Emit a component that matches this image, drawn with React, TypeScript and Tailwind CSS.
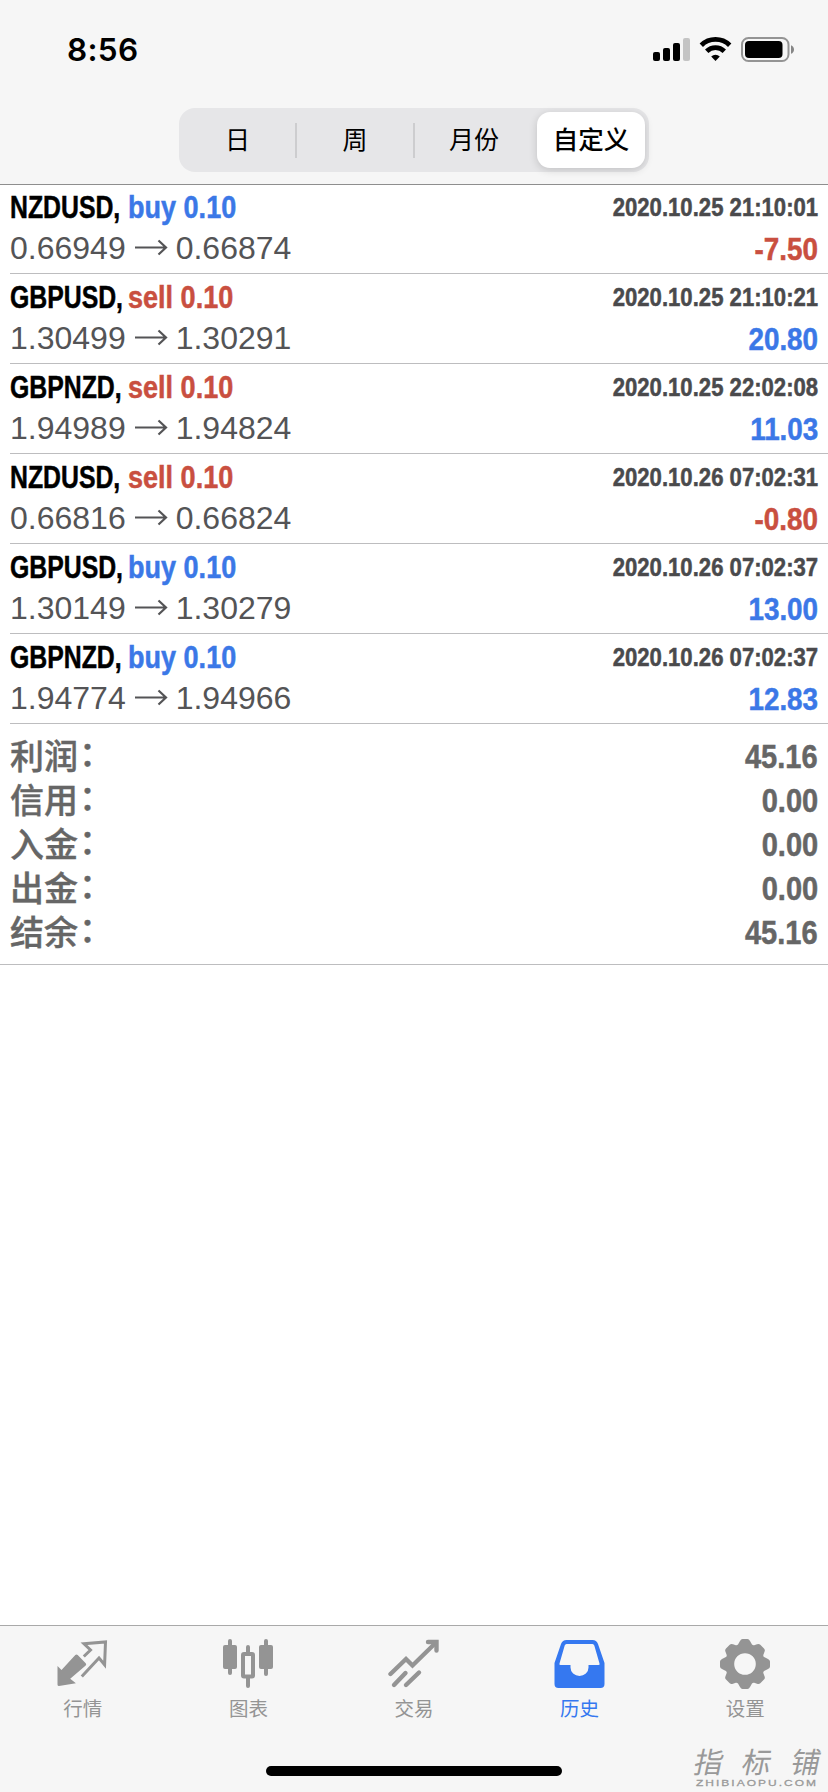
import type { ReactNode } from "react";

type Deal = {
  symbol: string;
  side: "buy" | "sell";
  from: string;
  to: string;
  time: string;
  profit: string;
};

const deals: Deal[] = [
  { symbol: "NZDUSD", side: "buy", from: "0.66949", to: "0.66874", time: "2020.10.25 21:10:01", profit: "-7.50" },
  { symbol: "GBPUSD", side: "sell", from: "1.30499", to: "1.30291", time: "2020.10.25 21:10:21", profit: "20.80" },
  { symbol: "GBPNZD", side: "sell", from: "1.94989", to: "1.94824", time: "2020.10.25 22:02:08", profit: "11.03" },
  { symbol: "NZDUSD", side: "sell", from: "0.66816", to: "0.66824", time: "2020.10.26 07:02:31", profit: "-0.80" },
  { symbol: "GBPUSD", side: "buy", from: "1.30149", to: "1.30279", time: "2020.10.26 07:02:37", profit: "13.00" },
  { symbol: "GBPNZD", side: "buy", from: "1.94774", to: "1.94966", time: "2020.10.26 07:02:37", profit: "12.83" },
];

const summary = [
  ["利润", "45.16"],
  ["信用", "0.00"],
  ["入金", "0.00"],
  ["出金", "0.00"],
  ["结余", "45.16"],
];

function StatusBar() {
  return (
    <div className="flex h-[108px] items-start justify-between pl-[67px] pr-[33px] pt-[31px]">
      <div className="font-['Inter',sans-serif] text-[31.5px] font-semibold leading-[38px] tracking-[0.3px] text-black">8:56</div>
      <svg className="mt-[5px]" width="142" height="28" viewBox="0 0 142 28">
        <rect x="0" y="16" width="7" height="9" rx="2" />
        <rect x="10" y="12" width="7" height="13" rx="2" />
        <rect x="20" y="7" width="7" height="18" rx="2" />
        <rect x="30" y="2" width="7" height="23" rx="2" fill="#c4c4c4" />
        <g fill="none" stroke="#000" strokeWidth="4.8">
          <path d="M48.3 9.2a20.3 20.3 0 0 1 28.4 0" />
          <path d="M53.7 15.3a12.6 12.6 0 0 1 17.6 0" />
        </g>
        <path d="M58.2 20.4a6.3 6.3 0 0 1 8.6 0l-4.3 4.5z" />
        <rect x="89" y="2" width="46.5" height="23" rx="6.5" fill="none" stroke="#949494" strokeWidth="2" />
        <rect x="92" y="5" width="37.5" height="17" rx="4" />
        <path d="M138 9.2c4 1.4 4 7.2 0 8.6z" fill="#868686" />
      </svg>
    </div>
  );
}

function SegmentedControl() {
  return (
    <div className="mx-auto flex h-[64px] w-[470px] items-center rounded-[16px] bg-[#e6e6e8] p-1 font-['Noto_Sans_CJK_SC',sans-serif] text-[25px] leading-none text-black">
      <div className="w-[112px] pb-[3px] pr-[3px] text-center">日</div>
      <div className="h-[35px] w-[2px] bg-[#cdcdcf]" />
      <div className="w-[116px] pb-[3px] text-center">周</div>
      <div className="h-[35px] w-[2px] bg-[#cdcdcf]" />
      <div className="w-[122px] pb-[3px] pr-[4px] text-center">月份</div>
      <div className="flex h-[56px] flex-1 items-center justify-center rounded-[13px] bg-white pb-[4px] text-[25.5px] font-medium shadow-[0_2px_8px_rgba(0,0,0,0.16)]">
        自定义
      </div>
    </div>
  );
}

function DealRow({ deal }: { deal: Deal }) {
  const blue = "text-[#3b78e7]";
  const red = "text-[#c94f40]";
  return (
    <div className="ml-[10px] h-[90px] border-b border-[#bdbdbf] pr-[10px] pt-[3px] font-['Liberation_Sans',sans-serif]">
      <div className="flex h-[40px] items-center justify-between whitespace-nowrap font-bold [-webkit-text-stroke:0.5px]">
        <div className="flex text-[32px] leading-[40px]">
          <div className="w-[118px]">
            <div className="w-max origin-left scale-x-[0.775] text-black">{deal.symbol},</div>
          </div>
          <div className={`w-max origin-left scale-x-[0.845] ${deal.side === "buy" ? blue : red}`}>{deal.side} 0.10</div>
        </div>
        <div className="origin-right scale-x-[0.885] pt-[2px] text-[25px] text-[#4a4a4c]">{deal.time}</div>
      </div>
      <div className="flex h-[42px] items-center justify-between whitespace-nowrap">
        <div className="flex items-center text-[32px] leading-[42px] text-[#545456]">
          {deal.from}
          <svg className="ml-[8px] mr-[8px]" width="34" height="18" viewBox="0 0 34 18" fill="none" stroke="#545456" strokeWidth="2.2">
            <path d="M1 8.500h31M24.500 1.500l7.500 7-7.500 7" />
          </svg>
          {deal.to}
        </div>
        <div className={`origin-right scale-x-[0.87] pt-[2px] text-[32px] font-bold leading-[42px] [-webkit-text-stroke:0.5px] ${deal.profit.startsWith("-") ? red : blue}`}>{deal.profit}</div>
      </div>
    </div>
  );
}

function Tab({ label, active, children }: { label: string; active?: boolean; children: ReactNode }) {
  return (
    <div className={`flex flex-1 flex-col items-center ${active ? "text-[#3578f0]" : "text-[#949494]"}`}>
      <svg className="mt-[12px]" width="52" height="52" viewBox="0 0 52 52" fill="currentColor" stroke="none">
        {children}
      </svg>
      <div className="mt-[6px] font-['Noto_Sans_CJK_SC',sans-serif] text-[19.5px] leading-[24px]">{label}</div>
    </div>
  );
}

function TabBar() {
  return (
    <div className="relative h-[167px] border-t border-[#a9a9a9] bg-[#f6f6f6]">
      <div className="flex">
        <Tab label="行情">
          <path d="M18.300 17q1.200-1.200 2.400 0l8 8.300q1 1.100 0 2.200L13.200 40.700l5.700 4.600L2 48q-1.500 0-1.500-1.500V28l4 4z" />
          <path d="M26.800 18.500L33.500 12 27 5.800 48.500 4 47.600 26.800 42 20 24.800 38.500" fill="none" stroke="currentColor" strokeWidth="3" />
        </Tab>
        <Tab label="图表">
          <rect x="1" y="7" width="14" height="24" rx="2" />
          <rect x="6" y="1" width="4" height="36" rx="2" />
          <rect x="37" y="7" width="14" height="24" rx="2" />
          <rect x="42" y="1" width="4" height="37" rx="2" />
          <rect x="21" y="16" width="10" height="22.5" rx="1" fill="none" stroke="currentColor" strokeWidth="4" />
          <path d="M26 9v6M26 40v8" stroke="currentColor" strokeWidth="4" strokeLinecap="round" />
        </Tab>
        <Tab label="交易">
          <g fill="none" stroke="currentColor" strokeWidth="4.4" strokeLinecap="round" strokeLinejoin="round">
            <path d="M2.500 36l15.500-15 6.500 6.500L47.500 5" strokeLinejoin="miter" />
            <path d="M40 4h8.500v8.500" strokeLinejoin="miter" />
            <path d="M6 47L17.500 35M18 47L31 34.500" />
          </g>
        </Tab>
        <Tab label="历史" active>
          <path fillRule="evenodd" d="M12.500 2h26q4 0 5.500 4L50.500 25v21q0 4-4 4h-42q-4 0-4-4V25L7 6q1.500-4 5.500-4zM12.500 6q-1.300 0-1.800 1.500L5.500 25.500q-.5 1.500 1 1.500h10v2.500a9 8.500 0 0 0 18 0V27h10q1.500 0 1-1.500L40.300 7.500Q39.800 6 38.500 6z" />
        </Tab>
        <Tab label="设置">
          <path
            fillRule="evenodd"
            d="M22.500 1h6q1.500 0 2.500 2l2 3.600q1 1 2.200.6L38 6.200q2-.8 3.300.5l3.700 3.800q1.300 1.300.6 3L44.300 17q-.2 1.200.8 2L49 21q2 1 2 2.500v5q0 1.500-2 2.500l-3.900 2q-1 .8-.8 2l1.300 3.500q.7 1.700-.6 3L41.300 45.300q-1.300 1.300-3.300.5l-2.800-1q-1.200-.4-2.200.6L31 49q-1 2-2.500 2h-5q-1.500 0-2.500-2l-2-3.600q-1-1-2.200-.6l-2.800 1q-2 .8-3.300-.5L7 41.500q-1.300-1.300-.6-3L7.700 35q.2-1.200-.8-2L3 31q-2-1-2-2.500v-5Q1 22 3 21l3.900-2q1-.8.8-2L6.400 13.500q-.7-1.700.6-3L10.700 6.700q1.300-1.300 3.300-.5l2.800 1q1.200.4 2.200-.6L21 3q1-2 2.500-2zM26 15.200a10.800 10.800 0 1 0 0 21.600 10.800 10.800 0 0 0 0-21.600z"
          />
        </Tab>
      </div>
      <div className="absolute left-[266px] top-[140px] h-[10px] w-[296px] rounded-full bg-black" />
      <div className="absolute left-[695px] top-[116px] w-[126px] text-[#999999]">
        <div className="flex justify-between font-['Noto_Sans_CJK_SC',sans-serif] text-[29px] leading-[36px]">
          <span className="-skew-x-12">指</span>
          <span className="-skew-x-12">标</span>
          <span className="-skew-x-12">铺</span>
        </div>
        <div className="absolute left-px top-[35px] w-max origin-left scale-x-[1.26] font-['Liberation_Sans',sans-serif] text-[9.5px] leading-[12px] tracking-[1.6px] [-webkit-text-stroke:0.3px]">ZHIBIAOPU.COM</div>
      </div>
    </div>
  );
}

export default function App() {
  return (
    <div className="flex h-[1792px] w-[828px] flex-col overflow-hidden bg-white">
      <header className="h-[185px] border-b border-[#8e8e8e] bg-[#f6f6f6]">
        <StatusBar />
        <SegmentedControl />
      </header>
      <main className="flex-1">
        <div className="-mt-px">
          {deals.map((deal) => (
            <DealRow key={deal.time + deal.symbol} deal={deal} />
          ))}
        </div>
        <div className="h-[241px] border-b border-[#bdbdbf] px-[10px] pt-[10px] text-[#666666]">
          {summary.map(([label, value]) => (
            <div key={label} className="flex h-[44px] items-center justify-between whitespace-nowrap">
              <div className="flex pb-[3px] font-['Noto_Sans_CJK_SC',sans-serif] text-[34px] font-medium leading-[41px] [-webkit-text-stroke:0.4px]">
                {label}
                <span className="-mt-[3px] ml-px">：</span>
              </div>
              <div className="origin-right scale-x-[0.88] pt-[2px] font-['Liberation_Sans',sans-serif] text-[33px] font-bold leading-[42px] [-webkit-text-stroke:0.5px]">{value}</div>
            </div>
          ))}
        </div>
      </main>
      <TabBar />
    </div>
  );
}
